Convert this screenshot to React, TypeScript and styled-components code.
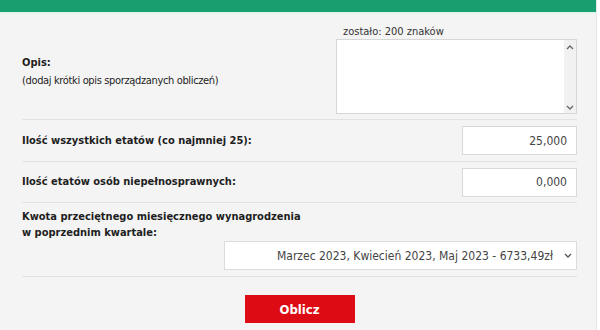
import { createGlobalStyle } from "styled-components";
import styled from "styled-components";

const GlobalStyle = createGlobalStyle`
  html, body {
    margin: 0;
    padding: 0;
    background: #ffffff;
  }
  body {
    font-family: "DejaVu Sans Condensed", "DejaVu Sans", sans-serif;
    color: #1e1e1e;
  }
`;

const Panel = styled.div`
  width: 596px;
  height: 330px;
  background: #f4f4f4;
  border-right: 1px solid #e6e6e6;
  display: flex;
  flex-direction: column;
`;

const TopBar = styled.div`
  height: 12px;
  background: #199e70;
  border-bottom: 2px solid #e6f4ee;
`;

const Form = styled.form`
  display: flex;
  flex-direction: column;
  padding: 0 19px 0 22px;
`;

const Row = styled.div<{ $height: number }>`
  display: flex;
  align-items: center;
  justify-content: space-between;
  height: ${({ $height }) => $height}px;
  border-bottom: 1px solid #e2e2e2;
`;

const DescriptionRow = styled(Row)`
  align-items: stretch;
`;

const LabelBlock = styled.div`
  align-self: center;
  padding-top: 13px;
`;

const TextAreaBlock = styled.div`
  align-self: flex-end;
  padding-bottom: 5px;
`;

const StackRow = styled.div`
  display: flex;
  flex-direction: column;
  padding: 6px 0 6px;
  border-bottom: 1px solid #e2e2e2;
`;

const Label = styled.div`
  font-size: 11px;
  font-weight: 700;
  line-height: 16px;
`;

const Hint = styled.div`
  font-size: 11px;
  font-weight: 400;
  line-height: 20px;
  letter-spacing: -0.35px;
`;

const Counter = styled.div`
  font-size: 11px;
  line-height: 14px;
  color: #333333;
  padding-left: 7px;
`;

const TextAreaBox = styled.div`
  width: 239px;
  height: 73px;
  display: flex;
  background: #ffffff;
  border: 1px solid #d6d6d6;
`;

const TextArea = styled.textarea`
  flex: 1;
  border: none;
  outline: none;
  resize: none;
  background: transparent;
  font-family: inherit;
  font-size: 12px;
`;

const ScrollTrack = styled.div`
  width: 12px;
  background: #f1f1f1;
  display: flex;
  flex-direction: column;
  justify-content: space-between;
  align-items: center;
  padding: 5px 0 3px;
`;

const NumberInput = styled.input`
  width: 104px;
  height: 27px;
  box-sizing: content-box;
  padding: 0 9px 0 0;
  border: 1px solid #d9d9d9;
  background: #ffffff;
  text-align: right;
  font-family: inherit;
  font-size: 12px;
  color: #444444;
  outline: none;
`;

const SelectWrap = styled.div`
  position: relative;
  align-self: flex-end;
`;

const Select = styled.select`
  width: 353px;
  height: 29px;
  appearance: none;
  border: 1px solid #dcdcdc;
  background: #ffffff;
  font-family: inherit;
  font-size: 12px;
  color: #444444;
  text-align: right;
  text-align-last: right;
  padding: 0 23px 0 0;
  outline: none;
`;

const Chevron = styled.svg`
  position: absolute;
  right: 5px;
  top: 12px;
  pointer-events: none;
`;

const ButtonBar = styled.div`
  display: flex;
  justify-content: center;
  padding-top: 18px;
`;

const Button = styled.button`
  width: 110px;
  height: 28px;
  border: none;
  background: #dc0b14;
  color: #ffffff;
  font-family: inherit;
  font-weight: 700;
  font-size: 13px;
  cursor: pointer;
`;

function ArrowIcon({ up }: { up?: boolean }) {
  return (
    <svg width="8" height="5" viewBox="0 0 8 5">
      <path
        d={up ? "M1 4 L4 1 L7 4" : "M1 1 L4 4 L7 1"}
        fill="none"
        stroke="#666666"
        strokeWidth="1.3"
      />
    </svg>
  );
}

export default function App() {
  return (
    <>
      <GlobalStyle />
      <Panel>
        <TopBar />
        <Form onSubmit={(e) => e.preventDefault()}>
          <DescriptionRow $height={105}>
            <LabelBlock>
              <Label>Opis:</Label>
              <Hint>(dodaj krótki opis sporządzanych obliczeń)</Hint>
            </LabelBlock>
            <TextAreaBlock>
              <Counter>zostało: 200 znaków</Counter>
              <TextAreaBox>
                <TextArea />
                <ScrollTrack>
                  <ArrowIcon up />
                  <ArrowIcon />
                </ScrollTrack>
              </TextAreaBox>
            </TextAreaBlock>
          </DescriptionRow>
          <Row $height={41}>
            <Label>Ilość wszystkich etatów (co najmniej 25):</Label>
            <NumberInput defaultValue="25,000" />
          </Row>
          <Row $height={40}>
            <Label>Ilość etatów osób niepełnosprawnych:</Label>
            <NumberInput defaultValue="0,000" />
          </Row>
          <StackRow>
            <Label>
              Kwota przeciętnego miesięcznego wynagrodzenia
              <br />w poprzednim kwartale:
            </Label>
            <SelectWrap>
              <Select defaultValue="q">
                <option value="q">
                  Marzec 2023, Kwiecień 2023, Maj 2023 - 6733,49zł
                </option>
              </Select>
              <Chevron width="8" height="5" viewBox="0 0 8 5">
                <path d="M1 1 L4 4 L7 1" fill="none" stroke="#555555" strokeWidth="1.3" />
              </Chevron>
            </SelectWrap>
          </StackRow>
          <ButtonBar>
            <Button type="submit">Oblicz</Button>
          </ButtonBar>
        </Form>
      </Panel>
    </>
  );
}
